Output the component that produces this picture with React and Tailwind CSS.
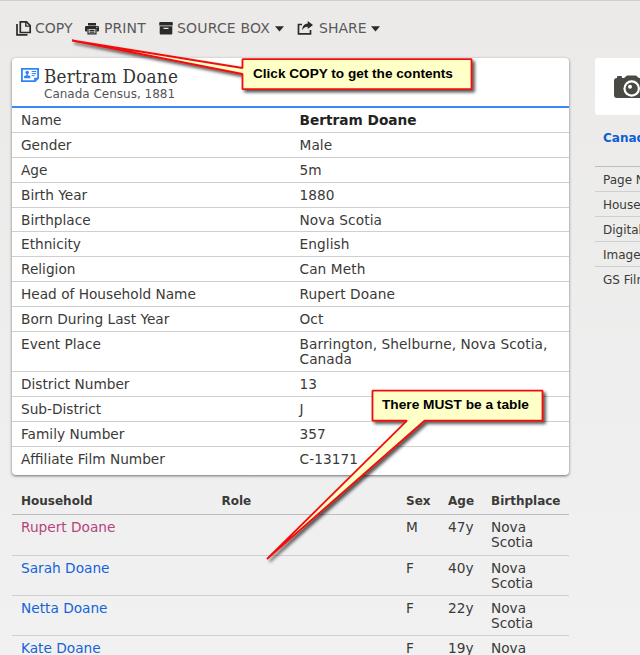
import React from "react";

const facts = [
  ["Name", "Bertram Doane"],
  ["Gender", "Male"],
  ["Age", "5m"],
  ["Birth Year", "1880"],
  ["Birthplace", "Nova Scotia"],
  ["Ethnicity", "English"],
  ["Religion", "Can Meth"],
  ["Head of Household Name", "Rupert Doane"],
  ["Born During Last Year", "Oct"],
  ["Event Place", "Barrington, Shelburne, Nova Scotia, Canada"],
  ["District Number", "13"],
  ["Sub-District", "J"],
  ["Family Number", "357"],
  ["Affiliate Film Number", "C-13171"],
];

const household = [
  ["Rupert Doane", "M", "47y"],
  ["Sarah Doane", "F", "40y"],
  ["Netta Doane", "F", "22y"],
  ["Kate Doane", "F", "19y"],
];

const details = ["Page Number", "Household ID", "Digital Folder", "Image Number", "GS Film Number"];

function CopyIcon() {
  return (
    <svg width="16" height="15" viewBox="0 0 16 15" fill="none" stroke="#2b2b2b">
      <path d="M4.300.900h6.200l3.700 3.600v7H4.300z" strokeWidth="1.700" />
      <path d="M9.800 1v4.100h4.200" strokeWidth="1.400" />
      <path d="M1 3v10.900h10.500" strokeWidth="1.700" />
    </svg>
  );
}

function PrintIcon() {
  return (
    <svg width="14" height="13" viewBox="0 0 14 13">
      <path fill="#2b2b2b" d="M3 1h8v2.400H3zM1.200 4h11.600q1.200 0 1.200 1.200v3.600q0 .8-1 .8h-1.300V7H2.300v2.600H1Q0 9.600 0 8.800V5.200Q0 4 1.200 4z" />
      <path fill="none" stroke="#2b2b2b" strokeWidth="1.200" d="M3 7v4.800h8V7M4.500 8.300h5M4.500 10.200h5" />
      <circle cx="11.900" cy="5.400" r=".6" fill="#ebeae9" />
    </svg>
  );
}

function BoxIcon() {
  return (
    <svg width="14" height="13" viewBox="0 0 14 13" fill="#2b2b2b">
      <path d="M1.200 0h11.600q1 0 1 1v2.400H.2V1q0-1 1-1z" />
      <path fillRule="evenodd" d="M.7 4.200h12.600v7.400q0 1-1 1H1.700q-1 0-1-1zM4.500 5.800v1.300h5V5.800z" />
    </svg>
  );
}

function ShareIcon() {
  return (
    <svg width="17" height="14" viewBox="0 0 17 14">
      <path fill="none" stroke="#2b2b2b" strokeWidth="1.700" d="M5 3.500H1.500v9.300h12V9" />
      <path fill="#2b2b2b" d="M10.700 0l5.300 4-5.300 4V5.700C8 5.600 6.500 6.800 5.300 9.200 5.100 5.500 7 2.700 10.700 2.400z" />
    </svg>
  );
}

function Caret() {
  return (
    <svg width="9" height="6" viewBox="0 0 9 6" className="relative top-px">
      <path fill="#2b2b2b" d="M0 .3h9L4.500 5.500z" />
    </svg>
  );
}

function RecordIcon() {
  return (
    <svg width="18" height="14" viewBox="0 0 18 14" className="mt-px">
      <path d="M.9.900h16.200v9.300l-3 2.900H.9z" fill="none" stroke="#2f84fb" strokeWidth="1.800" />
      <path d="M13.200 13.500V9.700h4z" fill="#2f84fb" />
      <circle cx="6.200" cy="4.600" r="1.800" fill="#2f84fb" />
      <path d="M5.500 5h1.400v2.300l2.400.8v2.100H3.100V8.100l2.400-.8z" fill="#2f84fb" />
      <path d="M10.700 3.500h4.500M10.700 5.600h4.500M10.700 7.700h3" stroke="#2f84fb" strokeWidth="1" />
    </svg>
  );
}

function CameraIcon() {
  return (
    <svg width="36" height="24" viewBox="0 0 36 24" className="shrink-0">
      <path fill="#4a4a45" d="M4 3V2Q4 1 5 1h3q1 0 1 1v1h2l3-2.500h9l3 2.500h6q3.500 0 3.500 4v12q0 4-4 4H4q-3 0-3-3V6q0-3 3-3z" />
      <circle cx="18.700" cy="13.500" r="8.300" fill="#fff" />
      <circle cx="18.700" cy="13.500" r="6.900" fill="#4a4a45" />
      <circle cx="18.700" cy="13.500" r="6.900" fill="none" stroke="#fff" strokeWidth="1.600" />
      <circle cx="18.700" cy="13.500" r="4.600" fill="#4a4a45" />
      <circle cx="17" cy="11.800" r="2" fill="#fff" />
    </svg>
  );
}

function Callouts() {
  return (
    <div className="pointer-events-none absolute inset-x-0 -top-px h-[655px]">
      <svg width="640" height="655" viewBox="0 0 640 655" className="absolute inset-0">
        <defs>
          <filter id="shade" x="-10%" y="-20%" width="120%" height="150%">
            <feDropShadow dx="2.500" dy="2.500" stdDeviation="1.800" floodColor="#000" floodOpacity="0.650" />
          </filter>
        </defs>
        <g fill="#ffffc8" stroke="#f01010" strokeWidth="1.800" strokeLinejoin="bevel">
          <path filter="url(#shade)" d="M242.500 59.200H471.500V89.200H242.500V74L72 40.500L242.500 68z" />
          <path filter="url(#shade)" d="M372.500 390.700H542.500V420.700H424.500L267 559L407 420.700H372.500z" />
        </g>
      </svg>
      <span className="absolute left-[253px] top-[66px] whitespace-nowrap text-[13.600px] leading-4 font-bold text-black font-['Liberation_Sans',sans-serif]">
        Click COPY to get the contents
      </span>
      <span className="absolute left-[382px] top-[397px] whitespace-nowrap text-[13.700px] leading-4 font-bold text-black font-['Liberation_Sans',sans-serif]">
        There MUST be a table
      </span>
    </div>
  );
}

export default function App() {
  return (
    <div className="relative h-[655px] w-[640px] overflow-hidden border-t border-[#cfcecd] bg-linear-to-b from-[#ebeae9] to-[#f1f1f1] text-[13.700px] text-[#3a3a38] font-['DejaVu_Sans',sans-serif]">
      <nav className="flex h-[57px] items-start pl-4 pt-[18px] text-[#5a5a5a] text-[14px]">
        <div className="flex h-[18px] items-center">
          <CopyIcon />
          <span className="ml-[3px] w-[47px]">COPY</span>
          <span className="ml-[3px]"><PrintIcon /></span>
          <span className="ml-[5px] w-[55px] tracking-[0.100px]">PRINT</span>
          <BoxIcon />
          <span className="ml-[4px] w-[98px] whitespace-nowrap tracking-[0.180px]">SOURCE BOX</span>
          <Caret />
          <span className="ml-[13px]"><ShareIcon /></span>
          <span className="ml-[5px] w-[52px]">SHARE</span>
          <Caret />
        </div>
      </nav>
      <div className="flex items-start">
        <main className="ml-3 w-[557px] shrink-0">
          <section className="h-[417px] rounded-[4px] bg-white shadow-[0_1px_3px_rgba(0,0,0,0.550)]">
            <header className="flex h-[50px] border-b-2 border-[#3b88f0] pl-[9px] pt-[9px]">
              <RecordIcon />
              <div className="ml-[5px]">
                <h1 className="whitespace-nowrap text-[18.700px] leading-[20px] tracking-[0.250px] text-[#333] font-['DejaVu_Serif_Condensed','DejaVu_Serif',serif] [font-stretch:condensed]">Bertram Doane</h1>
                <p className="text-[12px] leading-[14px] text-[#555]">Canada Census, 1881</p>
              </div>
            </header>
            <dl>
              {facts.map(([label, value], i) => (
                <div
                  key={label}
                  className="flex border-b border-[#cfcfcf] pb-[3.650px] pl-[9px] pt-[5px] leading-[15.250px] last:border-b-0"
                >
                  <dt className="w-[278.500px] shrink-0">{label}</dt>
                  <dd className={i === 0 ? "font-bold text-[#222]" : "w-[256px] tracking-[0.080px]"}>{value}</dd>
                </div>
              ))}
            </dl>
          </section>
          <table className="mt-[14px] w-full table-fixed border-collapse text-left leading-[15.300px]">
            <colgroup>
              <col className="w-[200.500px]" />
              <col className="w-[184.500px]" />
              <col className="w-[42px]" />
              <col className="w-[43px]" />
              <col />
            </colgroup>
            <thead>
              <tr className="h-[25px] border-b border-[#bdbdbd] text-[12px]">
                {["Household", "Role", "Sex", "Age", "Birthplace"].map((name) => (
                  <th key={name} className="pl-[9px] pt-px">{name}</th>
                ))}
              </tr>
            </thead>
            <tbody>
              {household.map(([name, sex, age], i) => (
                <tr key={name} className="h-[40px] border-b border-[#cfcfcf] align-top first:h-[41px]">
                  <td className={i === 0 ? "pl-[9px] pt-[5px] text-[#b5447b]" : "pl-[9px] pt-[5px] text-[#1464d8]"}>{name}</td>
                  <td />
                  <td className="pl-[9px] pt-[5px]">{sex}</td>
                  <td className="pl-[9px] pt-[5px]">{age}</td>
                  <td className="pl-[9px] pt-[5px]">Nova<br />Scotia</td>
                </tr>
              ))}
            </tbody>
          </table>
        </main>
        <aside className="ml-[26px] w-[200px] shrink-0 text-[12px]">
          <div className="flex h-[57px] items-center rounded-[3px] bg-white pl-[18px]">
            <CameraIcon />
          </div>
          <h2 className="h-[52px] border-b border-[#bdbdbd] pl-[8px] pt-[14px] font-bold text-[#0d5fd6]">Canada Census</h2>
          {details.map((name) => (
            <div key={name} className="h-[24.900px] border-b border-[#cfcfcf] pl-[8px] leading-[26px] last:border-b-0">
              {name}
            </div>
          ))}
        </aside>
      </div>
      <Callouts />
    </div>
  );
}
